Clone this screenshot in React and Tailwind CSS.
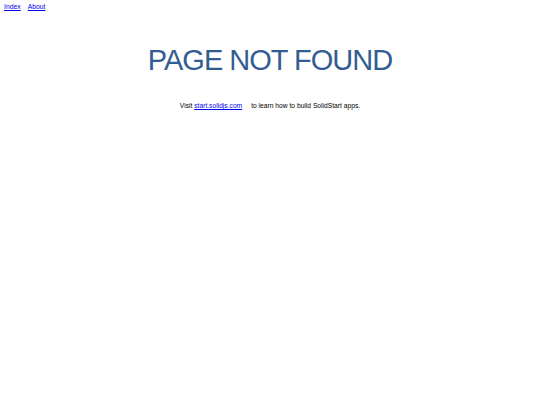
import React from 'react'

export default function App() {
  return (
    <div className="min-h-[405px] bg-white font-['Liberation_Sans',Arial,sans-serif]">
      <nav className="flex gap-[7px] px-[4px] pt-[2px] text-[6.8px] leading-[9px]">
        <a href="#" className="text-[#0000ee] underline">
          Index
        </a>
        <a href="#" className="text-[#0000ee] underline">
          About
        </a>
      </nav>
      <main className="text-center">
        <h1 className="mt-[32px] text-[29px] leading-[34px] tracking-[-1px] font-normal uppercase text-[#335d92]">
          Page Not Found
        </h1>
        <p className="mt-[24px] text-[6.7px] leading-[9px] text-black">
          Visit{' '}
          <a href="#" className="text-[#0000ee] underline">
            start.solidjs.com
          </a>
          <span className="inline-block w-[9px]" />
          to learn how to build SolidStart apps.
        </p>
      </main>
    </div>
  )
}
